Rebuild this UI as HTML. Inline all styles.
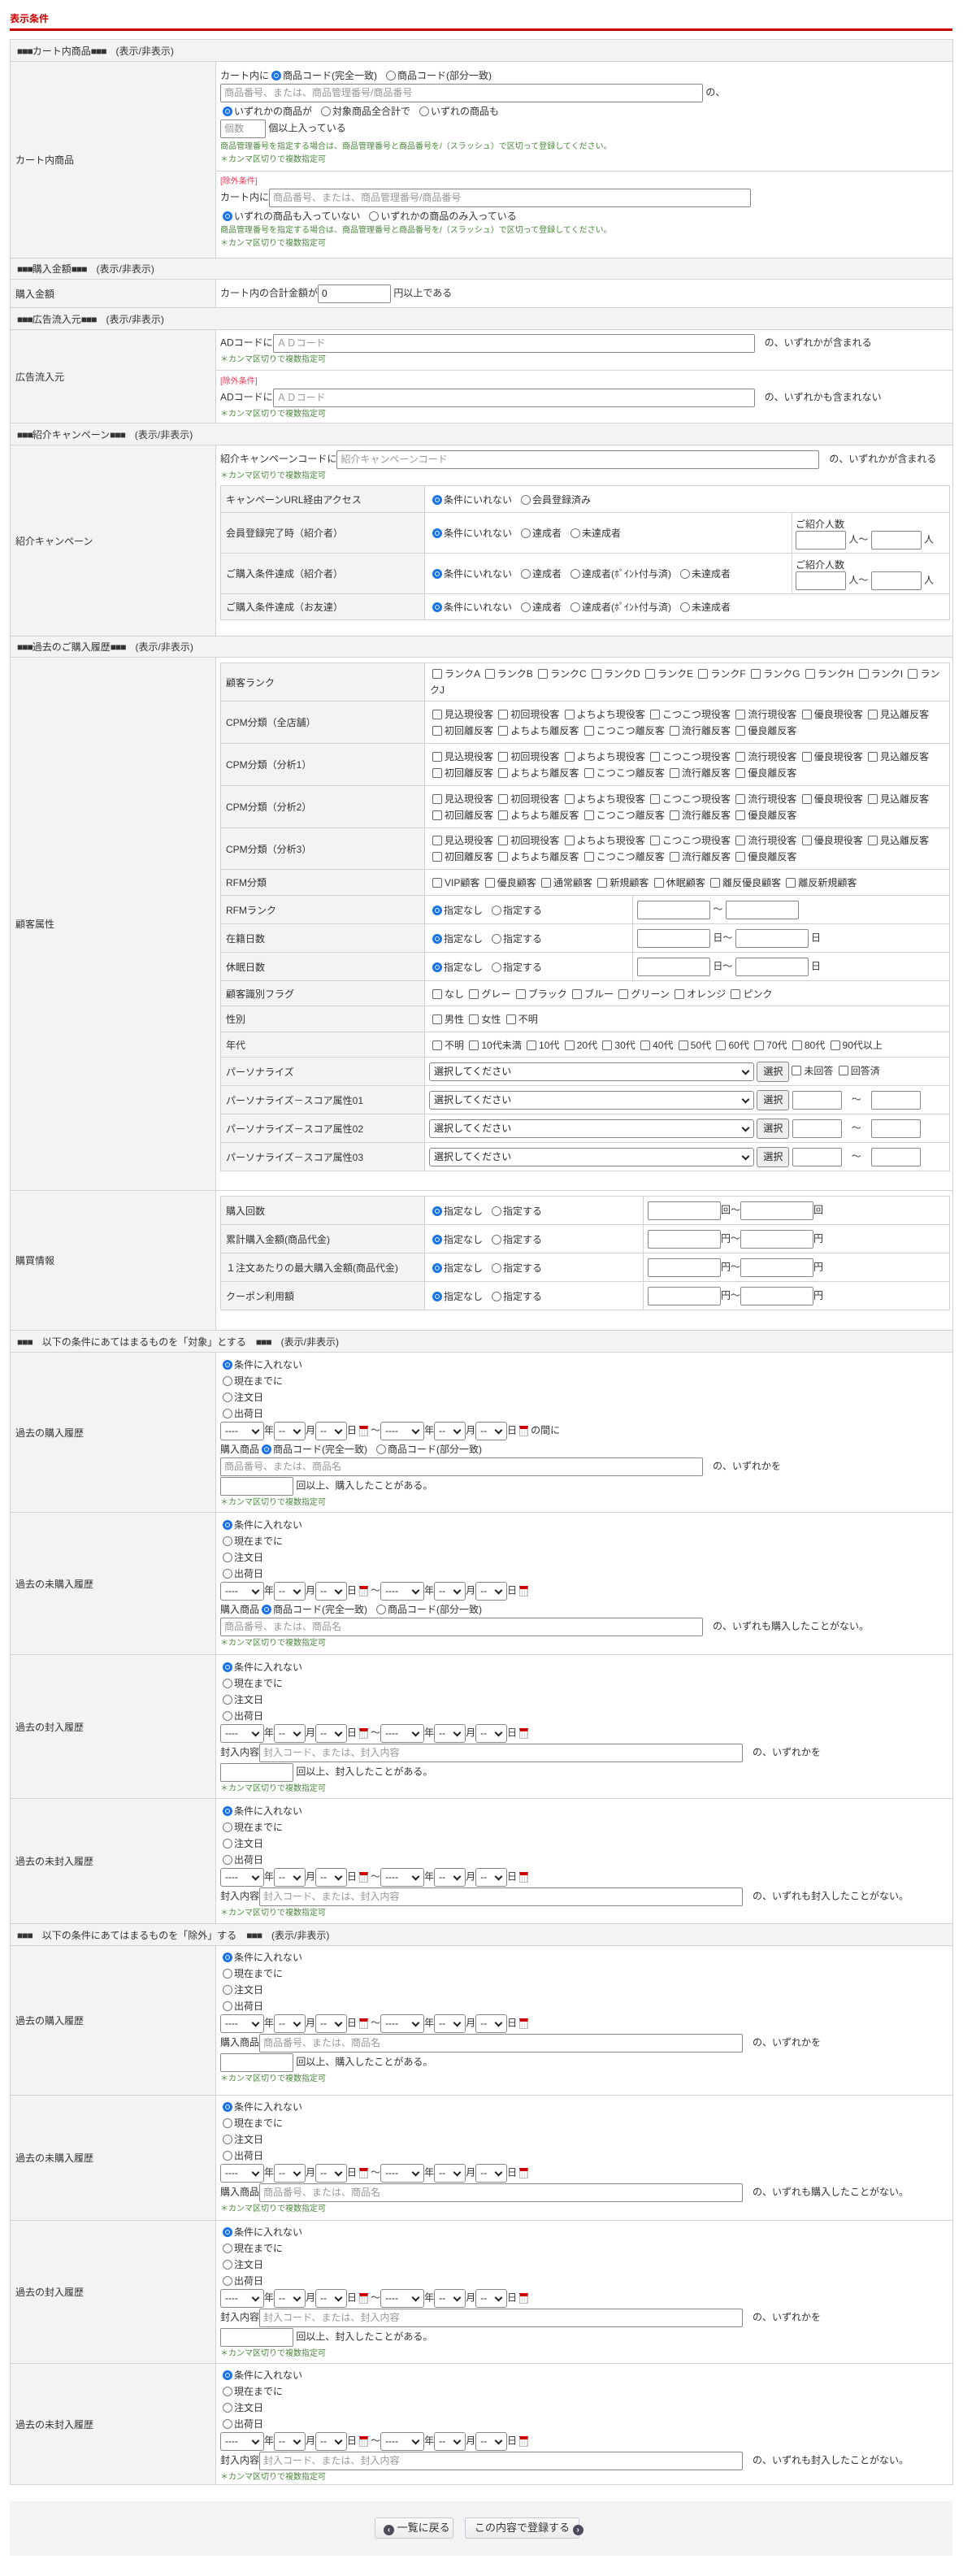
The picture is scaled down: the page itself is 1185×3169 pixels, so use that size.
<!DOCTYPE html>
<html><head><meta charset="utf-8">
<style>
*{box-sizing:border-box}
body{margin:0;background:#fff;font-family:"Liberation Sans","Noto Sans CJK JP",sans-serif;font-size:12px;color:#333;width:1185px;height:3169px;position:relative;overflow:hidden}
.ttl{position:absolute;left:12px;top:14px;color:#c00;font-weight:bold;font-size:12px}
.rl{position:absolute;left:12px;top:35px;width:1160px;height:3px;background:#c00}
table.m{position:absolute;left:12px;top:48px;width:1160px;border-collapse:collapse;table-layout:fixed}
.m>tbody>tr>th{background:#f2f3f3;text-align:left;font-weight:normal;padding:0 0 0 6px;border:1px solid #d2d2d2;vertical-align:middle}
.m>tbody>tr>td{border:1px solid #d2d2d2;padding:0 5px;vertical-align:top;white-space:nowrap}
.m>tbody>tr.h>td{background:#f2f3f3;padding:0 0 0 8px;vertical-align:middle}
.b{font-weight:bold;letter-spacing:-1px}
.ln{height:20px;line-height:20px;white-space:nowrap}
.r{height:24px;white-space:nowrap}
.in{display:inline-block;height:23px;border:1px solid #888;border-radius:2px;vertical-align:middle;color:#999;line-height:21px;padding-left:4px;background:#fff;overflow:hidden}
.nt{font-size:10px;color:#4b8a3e;height:16px;line-height:16px;white-space:nowrap}
.ex{font-size:10px;color:#e8405a;height:16px;line-height:16px}
.rd{display:inline-block;width:12px;height:12px;border:1px solid #777;border-radius:50%;vertical-align:-2px;margin:0 2px 0 3px;background:#fff}
.rd.on{border:3px solid #1a73e8;box-shadow:inset 0 0 0 1px #fff;background:#1a73e8}
.cb{display:inline-block;width:12px;height:12px;border:1px solid #666;border-radius:2px;vertical-align:-2px;margin:0 3px 0 3px;background:#fff}
.gap{display:inline-block;width:8px}
.sel{display:inline-block;height:23px;border:1px solid #888;border-radius:3px;vertical-align:middle;line-height:21px;padding-left:5px;position:relative;background:#fff;color:#222}
.sel:after{content:"";position:absolute;right:6px;top:6px;width:5px;height:5px;border-right:2px solid #222;border-bottom:2px solid #222;transform:rotate(45deg)}
.sb{display:inline-block;height:25px;width:40px;border:1px solid #888;border-radius:3px;vertical-align:middle;line-height:23px;text-align:center;background:#eee;color:#222}
.cal{display:inline-block;width:11px;height:13px;border:1px solid #bbb;border-top:4px solid #c00;vertical-align:middle;margin:0 3px;background:repeating-linear-gradient(90deg,#fff 0 2px,#ddd 2px 3px)}
table.i{width:897px;border-collapse:collapse;table-layout:fixed}
.i th{background:#f2f3f3;border:1px solid #d2d2d2;text-align:left;font-weight:normal;padding-left:6px;vertical-align:middle;white-space:nowrap}
.i td{border:1px solid #d2d2d2;padding:0 6px;vertical-align:middle;white-space:normal}
.i td.nw{white-space:nowrap}
.i td.bk{word-break:break-all;line-height:20px}
.bt{position:absolute;top:3077px;left:12px;width:1160px;height:67px;background:#f3f3f3}
.btn{position:absolute;top:20px;height:26px;border:1px solid #c6c6d2;border-radius:3px;background:linear-gradient(#fafafa,#ececec);font-size:13px;line-height:24px;color:#333;white-space:nowrap}
.ci{display:inline-block;width:13px;height:13px;border-radius:50%;background:#4b4b5a;color:#fff;font-size:10px;line-height:13px;text-align:center;vertical-align:-1px;font-weight:bold}
</style></head><body>
<div class="ttl">表示条件</div>
<div class="rl"></div>
<table class="m"><colgroup><col style="width:253px"><col style="width:907px"></colgroup><tbody>
<tr class="h" style="height:27px"><td colspan="2"><span class="b">■■■</span>カート内商品<span class="b">■■■</span>　(表示/非表示)</td></tr>
<tr style="height:242px"><th>カート内商品</th><td style="padding:0">
 <div style="height:135px;padding:7px 5px 0;border-bottom:1px solid #d2d2d2">
  <div class="ln">カート内に<span class="rd on"></span>商品コード(完全一致)<span class="gap"></span><span class="rd"></span>商品コード(部分一致)</div>
  <div class="r"><span class="in" style="width:594px">商品番号、または、商品管理番号/商品番号</span> の、</div>
  <div class="ln"><span class="rd on"></span>いずれかの商品が<span class="gap"></span><span class="rd"></span>対象商品全合計で<span class="gap"></span><span class="rd"></span>いずれの商品も</div>
  <div class="r"><span class="in" style="width:56px">個数</span> 個以上入っている</div>
  <div class="nt" style="margin-top:2px">商品管理番号を指定する場合は、商品管理番号と商品番号を/（スラッシュ）で区切って登録してください。</div>
  <div class="nt">＊カンマ区切りで複数指定可</div>
 </div>
 <div style="padding:5px 5px 0">
  <div class="ex">[除外条件]</div>
  <div class="r">カート内に<span class="in" style="width:593px">商品番号、または、商品管理番号/商品番号</span></div>
  <div class="ln"><span class="rd on"></span>いずれの商品も入っていない<span class="gap"></span><span class="rd"></span>いずれかの商品のみ入っている</div>
  <div class="nt">商品管理番号を指定する場合は、商品管理番号と商品番号を/（スラッシュ）で区切って登録してください。</div>
  <div class="nt">＊カンマ区切りで複数指定可</div>
 </div>
</td></tr>
<tr class="h" style="height:26px"><td colspan="2"><span class="b">■■■</span>購入金額<span class="b">■■■</span>　(表示/非表示)</td></tr>
<tr style="height:35px"><th>購入金額</th><td style="vertical-align:middle">カート内の合計金額が<span class="in" style="width:90px;color:#222">0</span> 円以上である</td></tr>
<tr class="h" style="height:27px"><td colspan="2"><span class="b">■■■</span>広告流入元<span class="b">■■■</span>　(表示/非表示)</td></tr>
<tr style="height:115px"><th>広告流入元</th><td style="padding:0">
 <div style="height:50px;padding:5px 5px 0;border-bottom:1px solid #d2d2d2">
  <div class="r">ADコードに<span class="in" style="width:593px">ＡＤコード</span>　の、いずれかが含まれる</div>
  <div class="nt">＊カンマ区切りで複数指定可</div>
 </div>
 <div style="padding:6px 5px 0">
  <div class="ex">[除外条件]</div>
  <div class="r">ADコードに<span class="in" style="width:593px">ＡＤコード</span>　の、いずれかも含まれない</div>
  <div class="nt">＊カンマ区切りで複数指定可</div>
 </div>
</td></tr>
<tr class="h" style="height:27px"><td colspan="2"><span class="b">■■■</span>紹介キャンペーン<span class="b">■■■</span>　(表示/非表示)</td></tr>
<tr style="height:235px"><th>紹介キャンペーン</th><td style="padding:6px 5px 0">
 <div class="r">紹介キャンペーンコードに<span class="in" style="width:594px">紹介キャンペーンコード</span>　の、いずれかが含まれる</div>
 <div class="nt" style="margin-bottom:3px">＊カンマ区切りで複数指定可</div>
 <table class="i"><colgroup><col style="width:251px"><col style="width:452px"><col style="width:194px"></colgroup>
  <tr style="height:33px"><th>キャンペーンURL経由アクセス</th><td colspan="2" class="nw"><span class="rd on"></span>条件にいれない<span class="gap"></span><span class="rd"></span>会員登録済み</td></tr>
  <tr style="height:50px"><th>会員登録完了時（紹介者）</th><td class="nw"><span class="rd on"></span>条件にいれない<span class="gap"></span><span class="rd"></span>達成者<span class="gap"></span><span class="rd"></span>未達成者</td><td class="nw" style="padding:0 4px">ご紹介人数<br><span class="in" style="width:62px"></span> 人～ <span class="in" style="width:62px"></span> 人</td></tr>
  <tr style="height:50px"><th>ご購入条件達成（紹介者）</th><td class="nw"><span class="rd on"></span>条件にいれない<span class="gap"></span><span class="rd"></span>達成者<span class="gap"></span><span class="rd"></span>達成者(ﾎﾟｲﾝﾄ付与済)<span class="gap"></span><span class="rd"></span>未達成者</td><td class="nw" style="padding:0 4px">ご紹介人数<br><span class="in" style="width:62px"></span> 人～ <span class="in" style="width:62px"></span> 人</td></tr>
  <tr style="height:32px"><th>ご購入条件達成（お友達）</th><td colspan="2" class="nw"><span class="rd on"></span>条件にいれない<span class="gap"></span><span class="rd"></span>達成者<span class="gap"></span><span class="rd"></span>達成者(ﾎﾟｲﾝﾄ付与済)<span class="gap"></span><span class="rd"></span>未達成者</td></tr>
 </table>
</td></tr>
<tr class="h" style="height:26px"><td colspan="2"><span class="b">■■■</span>過去のご購入履歴<span class="b">■■■</span>　(表示/非表示)</td></tr>
<tr style="height:656px"><th>顧客属性</th><td style="padding:6px 5px 0">
 <table class="i"><colgroup><col style="width:251px"><col style="width:256px"><col style="width:390px"></colgroup>
  <tr style="height:47px"><th>顧客ランク</th><td colspan="2" class="bk"><span class="cb"></span>ランクA <span class="cb"></span>ランクB <span class="cb"></span>ランクC <span class="cb"></span>ランクD <span class="cb"></span>ランクE <span class="cb"></span>ランクF <span class="cb"></span>ランクG <span class="cb"></span>ランクH <span class="cb"></span>ランクI <span class="cb"></span>ランクJ</td></tr>
  <tr style="height:52px"><th>CPM分類（全店舗）</th><td colspan="2" class="bk"><span class="cb"></span>見込現役客 <span class="cb"></span>初回現役客 <span class="cb"></span>よちよち現役客 <span class="cb"></span>こつこつ現役客 <span class="cb"></span>流行現役客 <span class="cb"></span>優良現役客 <span class="cb"></span>見込離反客 <span class="cb"></span>初回離反客 <span class="cb"></span>よちよち離反客 <span class="cb"></span>こつこつ離反客 <span class="cb"></span>流行離反客 <span class="cb"></span>優良離反客</td></tr>
  <tr style="height:52px"><th>CPM分類（分析1）</th><td colspan="2" class="bk"><span class="cb"></span>見込現役客 <span class="cb"></span>初回現役客 <span class="cb"></span>よちよち現役客 <span class="cb"></span>こつこつ現役客 <span class="cb"></span>流行現役客 <span class="cb"></span>優良現役客 <span class="cb"></span>見込離反客 <span class="cb"></span>初回離反客 <span class="cb"></span>よちよち離反客 <span class="cb"></span>こつこつ離反客 <span class="cb"></span>流行離反客 <span class="cb"></span>優良離反客</td></tr>
  <tr style="height:52px"><th>CPM分類（分析2）</th><td colspan="2" class="bk"><span class="cb"></span>見込現役客 <span class="cb"></span>初回現役客 <span class="cb"></span>よちよち現役客 <span class="cb"></span>こつこつ現役客 <span class="cb"></span>流行現役客 <span class="cb"></span>優良現役客 <span class="cb"></span>見込離反客 <span class="cb"></span>初回離反客 <span class="cb"></span>よちよち離反客 <span class="cb"></span>こつこつ離反客 <span class="cb"></span>流行離反客 <span class="cb"></span>優良離反客</td></tr>
  <tr style="height:51px"><th>CPM分類（分析3）</th><td colspan="2" class="bk"><span class="cb"></span>見込現役客 <span class="cb"></span>初回現役客 <span class="cb"></span>よちよち現役客 <span class="cb"></span>こつこつ現役客 <span class="cb"></span>流行現役客 <span class="cb"></span>優良現役客 <span class="cb"></span>見込離反客 <span class="cb"></span>初回離反客 <span class="cb"></span>よちよち離反客 <span class="cb"></span>こつこつ離反客 <span class="cb"></span>流行離反客 <span class="cb"></span>優良離反客</td></tr>
  <tr style="height:32px"><th>RFM分類</th><td colspan="2" class="nw"><span class="cb"></span>VIP顧客 <span class="cb"></span>優良顧客 <span class="cb"></span>通常顧客 <span class="cb"></span>新規顧客 <span class="cb"></span>休眠顧客 <span class="cb"></span>離反優良顧客 <span class="cb"></span>離反新規顧客</td></tr>
  <tr style="height:35px"><th>RFMランク</th><td class="nw"><span class="rd on"></span>指定なし<span class="gap"></span><span class="rd"></span>指定する</td><td class="nw" style="padding:0 5px"><span class="in" style="width:90px"></span> ～ <span class="in" style="width:90px"></span></td></tr>
  <tr style="height:35px"><th>在籍日数</th><td class="nw"><span class="rd on"></span>指定なし<span class="gap"></span><span class="rd"></span>指定する</td><td class="nw" style="padding:0 5px"><span class="in" style="width:90px"></span> 日～ <span class="in" style="width:90px"></span> 日</td></tr>
  <tr style="height:35px"><th>休眠日数</th><td class="nw"><span class="rd on"></span>指定なし<span class="gap"></span><span class="rd"></span>指定する</td><td class="nw" style="padding:0 5px"><span class="in" style="width:90px"></span> 日～ <span class="in" style="width:90px"></span> 日</td></tr>
  <tr style="height:31px"><th>顧客識別フラグ</th><td colspan="2" class="nw"><span class="cb"></span>なし <span class="cb"></span>グレー <span class="cb"></span>ブラック <span class="cb"></span>ブルー <span class="cb"></span>グリーン <span class="cb"></span>オレンジ <span class="cb"></span>ピンク</td></tr>
  <tr style="height:32px"><th>性別</th><td colspan="2" class="nw"><span class="cb"></span>男性 <span class="cb"></span>女性 <span class="cb"></span>不明</td></tr>
  <tr style="height:31px"><th>年代</th><td colspan="2" class="nw"><span class="cb"></span>不明 <span class="cb"></span>10代未満 <span class="cb"></span>10代 <span class="cb"></span>20代 <span class="cb"></span>30代 <span class="cb"></span>40代 <span class="cb"></span>50代 <span class="cb"></span>60代 <span class="cb"></span>70代 <span class="cb"></span>80代 <span class="cb"></span>90代以上</td></tr>
  <tr style="height:35px"><th>パーソナライズ</th><td colspan="2" class="nw" style="padding:0 5px"><span class="sel" style="width:400px">選択してください</span> <span class="sb">選択</span><span class="cb"></span>未回答 <span class="cb"></span>回答済</td></tr>
  <tr style="height:35px"><th>パーソナライズ－スコア属性01</th><td colspan="2" class="nw" style="padding:0 5px"><span class="sel" style="width:400px">選択してください</span> <span class="sb">選択</span> <span class="in" style="width:61px"></span>　～　<span class="in" style="width:61px"></span></td></tr>
  <tr style="height:35px"><th>パーソナライズ－スコア属性02</th><td colspan="2" class="nw" style="padding:0 5px"><span class="sel" style="width:400px">選択してください</span> <span class="sb">選択</span> <span class="in" style="width:61px"></span>　～　<span class="in" style="width:61px"></span></td></tr>
  <tr style="height:35px"><th>パーソナライズ－スコア属性03</th><td colspan="2" class="nw" style="padding:0 5px"><span class="sel" style="width:400px">選択してください</span> <span class="sb">選択</span> <span class="in" style="width:61px"></span>　～　<span class="in" style="width:61px"></span></td></tr>
 </table>
</td></tr>
<tr style="height:172px"><th>購買情報</th><td style="padding:6px 5px 0">
 <table class="i"><colgroup><col style="width:251px"><col style="width:269px"><col style="width:377px"></colgroup>
  <tr style="height:35px"><th>購入回数</th><td class="nw"><span class="rd on"></span>指定なし<span class="gap"></span><span class="rd"></span>指定する</td><td class="nw" style="padding:0 5px"><span class="in" style="width:90px"></span>回～<span class="in" style="width:90px"></span>回</td></tr>
  <tr style="height:35px"><th>累計購入金額(商品代金)</th><td class="nw"><span class="rd on"></span>指定なし<span class="gap"></span><span class="rd"></span>指定する</td><td class="nw" style="padding:0 5px"><span class="in" style="width:90px"></span>円～<span class="in" style="width:90px"></span>円</td></tr>
  <tr style="height:35px"><th>１注文あたりの最大購入金額(商品代金)</th><td class="nw"><span class="rd on"></span>指定なし<span class="gap"></span><span class="rd"></span>指定する</td><td class="nw" style="padding:0 5px"><span class="in" style="width:90px"></span>円～<span class="in" style="width:90px"></span>円</td></tr>
  <tr style="height:35px"><th>クーポン利用額</th><td class="nw"><span class="rd on"></span>指定なし<span class="gap"></span><span class="rd"></span>指定する</td><td class="nw" style="padding:0 5px"><span class="in" style="width:90px"></span>円～<span class="in" style="width:90px"></span>円</td></tr>
 </table>
</td></tr>
<tr class="h" style="height:27px"><td colspan="2"><span class="b">■■■</span>　以下の条件にあてはまるものを「対象」とする　<span class="b">■■■</span>　(表示/非表示)</td></tr>
<tr style="height:197px"><th>過去の購入履歴</th><td style="padding:5px 5px 0">
 <div class="ln"><span class="rd on"></span>条件に入れない</div><div class="ln"><span class="rd"></span>現在までに</div><div class="ln"><span class="rd"></span>注文日</div><div class="ln"><span class="rd"></span>出荷日</div>
 <div class="r"><span class="sel" style="width:54px">----</span>年<span class="sel" style="width:39px">--</span>月<span class="sel" style="width:39px">--</span>日<span class="cal"></span>～<span class="sel" style="width:54px">----</span>年<span class="sel" style="width:39px">--</span>月<span class="sel" style="width:39px">--</span>日<span class="cal"></span>の間に</div>
 <div class="ln">購入商品<span class="rd on"></span>商品コード(完全一致)<span class="gap"></span><span class="rd"></span>商品コード(部分一致)</div>
 <div class="r"><span class="in" style="width:594px">商品番号、または、商品名</span>　の、いずれかを</div>
 <div class="r"><span class="in" style="width:90px"></span> 回以上、購入したことがある。</div>
 <div class="nt">＊カンマ区切りで複数指定可</div>
</td></tr>
<tr style="height:175px"><th>過去の未購入履歴</th><td style="padding:5px 5px 0">
 <div class="ln"><span class="rd on"></span>条件に入れない</div><div class="ln"><span class="rd"></span>現在までに</div><div class="ln"><span class="rd"></span>注文日</div><div class="ln"><span class="rd"></span>出荷日</div>
 <div class="r"><span class="sel" style="width:54px">----</span>年<span class="sel" style="width:39px">--</span>月<span class="sel" style="width:39px">--</span>日<span class="cal"></span>～<span class="sel" style="width:54px">----</span>年<span class="sel" style="width:39px">--</span>月<span class="sel" style="width:39px">--</span>日<span class="cal"></span></div>
 <div class="ln">購入商品<span class="rd on"></span>商品コード(完全一致)<span class="gap"></span><span class="rd"></span>商品コード(部分一致)</div>
 <div class="r"><span class="in" style="width:594px">商品番号、または、商品名</span>　の、いずれも購入したことがない。</div>
 <div class="nt">＊カンマ区切りで複数指定可</div>
</td></tr>
<tr style="height:177px"><th>過去の封入履歴</th><td style="padding:5px 5px 0">
 <div class="ln"><span class="rd on"></span>条件に入れない</div><div class="ln"><span class="rd"></span>現在までに</div><div class="ln"><span class="rd"></span>注文日</div><div class="ln"><span class="rd"></span>出荷日</div>
 <div class="r"><span class="sel" style="width:54px">----</span>年<span class="sel" style="width:39px">--</span>月<span class="sel" style="width:39px">--</span>日<span class="cal"></span>～<span class="sel" style="width:54px">----</span>年<span class="sel" style="width:39px">--</span>月<span class="sel" style="width:39px">--</span>日<span class="cal"></span></div>
 <div class="r">封入内容<span class="in" style="width:595px">封入コード、または、封入内容</span>　の、いずれかを</div>
 <div class="r"><span class="in" style="width:90px"></span> 回以上、封入したことがある。</div>
 <div class="nt">＊カンマ区切りで複数指定可</div>
</td></tr>
<tr style="height:154px"><th>過去の未封入履歴</th><td style="padding:5px 5px 0">
 <div class="ln"><span class="rd on"></span>条件に入れない</div><div class="ln"><span class="rd"></span>現在までに</div><div class="ln"><span class="rd"></span>注文日</div><div class="ln"><span class="rd"></span>出荷日</div>
 <div class="r"><span class="sel" style="width:54px">----</span>年<span class="sel" style="width:39px">--</span>月<span class="sel" style="width:39px">--</span>日<span class="cal"></span>～<span class="sel" style="width:54px">----</span>年<span class="sel" style="width:39px">--</span>月<span class="sel" style="width:39px">--</span>日<span class="cal"></span></div>
 <div class="r">封入内容<span class="in" style="width:595px">封入コード、または、封入内容</span>　の、いずれも封入したことがない。</div>
 <div class="nt">＊カンマ区切りで複数指定可</div>
</td></tr>
<tr class="h" style="height:27px"><td colspan="2"><span class="b">■■■</span>　以下の条件にあてはまるものを「除外」する　<span class="b">■■■</span>　(表示/非表示)</td></tr>
<tr style="height:184px"><th>過去の購入履歴</th><td style="padding:4px 5px 0">
 <div class="ln"><span class="rd on"></span>条件に入れない</div><div class="ln"><span class="rd"></span>現在までに</div><div class="ln"><span class="rd"></span>注文日</div><div class="ln"><span class="rd"></span>出荷日</div>
 <div class="r"><span class="sel" style="width:54px">----</span>年<span class="sel" style="width:39px">--</span>月<span class="sel" style="width:39px">--</span>日<span class="cal"></span>～<span class="sel" style="width:54px">----</span>年<span class="sel" style="width:39px">--</span>月<span class="sel" style="width:39px">--</span>日<span class="cal"></span></div>
 <div class="r">購入商品<span class="in" style="width:595px">商品番号、または、商品名</span>　の、いずれかを</div>
 <div class="r"><span class="in" style="width:90px"></span> 回以上、購入したことがある。</div>
 <div class="nt">＊カンマ区切りで複数指定可</div>
</td></tr>
<tr style="height:154px"><th>過去の未購入履歴</th><td style="padding:4px 5px 0">
 <div class="ln"><span class="rd on"></span>条件に入れない</div><div class="ln"><span class="rd"></span>現在までに</div><div class="ln"><span class="rd"></span>注文日</div><div class="ln"><span class="rd"></span>出荷日</div>
 <div class="r"><span class="sel" style="width:54px">----</span>年<span class="sel" style="width:39px">--</span>月<span class="sel" style="width:39px">--</span>日<span class="cal"></span>～<span class="sel" style="width:54px">----</span>年<span class="sel" style="width:39px">--</span>月<span class="sel" style="width:39px">--</span>日<span class="cal"></span></div>
 <div class="r">購入商品<span class="in" style="width:595px">商品番号、または、商品名</span>　の、いずれも購入したことがない。</div>
 <div class="nt">＊カンマ区切りで複数指定可</div>
</td></tr>
<tr style="height:176px"><th>過去の封入履歴</th><td style="padding:4px 5px 0">
 <div class="ln"><span class="rd on"></span>条件に入れない</div><div class="ln"><span class="rd"></span>現在までに</div><div class="ln"><span class="rd"></span>注文日</div><div class="ln"><span class="rd"></span>出荷日</div>
 <div class="r"><span class="sel" style="width:54px">----</span>年<span class="sel" style="width:39px">--</span>月<span class="sel" style="width:39px">--</span>日<span class="cal"></span>～<span class="sel" style="width:54px">----</span>年<span class="sel" style="width:39px">--</span>月<span class="sel" style="width:39px">--</span>日<span class="cal"></span></div>
 <div class="r">封入内容<span class="in" style="width:595px">封入コード、または、封入内容</span>　の、いずれかを</div>
 <div class="r"><span class="in" style="width:90px"></span> 回以上、封入したことがある。</div>
 <div class="nt">＊カンマ区切りで複数指定可</div>
</td></tr>
<tr style="height:149px"><th>過去の未封入履歴</th><td style="padding:4px 5px 0">
 <div class="ln"><span class="rd on"></span>条件に入れない</div><div class="ln"><span class="rd"></span>現在までに</div><div class="ln"><span class="rd"></span>注文日</div><div class="ln"><span class="rd"></span>出荷日</div>
 <div class="r"><span class="sel" style="width:54px">----</span>年<span class="sel" style="width:39px">--</span>月<span class="sel" style="width:39px">--</span>日<span class="cal"></span>～<span class="sel" style="width:54px">----</span>年<span class="sel" style="width:39px">--</span>月<span class="sel" style="width:39px">--</span>日<span class="cal"></span></div>
 <div class="r">封入内容<span class="in" style="width:595px">封入コード、または、封入内容</span>　の、いずれも封入したことがない。</div>
 <div class="nt">＊カンマ区切りで複数指定可</div>
</td></tr>
</tbody></table>
<div class="bt">
 <div class="btn" style="left:449px;width:97px;padding-left:10px"><span class="ci">‹</span> 一覧に戻る</div>
 <div class="btn" style="left:560px;width:141px;padding-left:11px">この内容で登録する <span class="ci">›</span></div>
</div>
</body></html>
